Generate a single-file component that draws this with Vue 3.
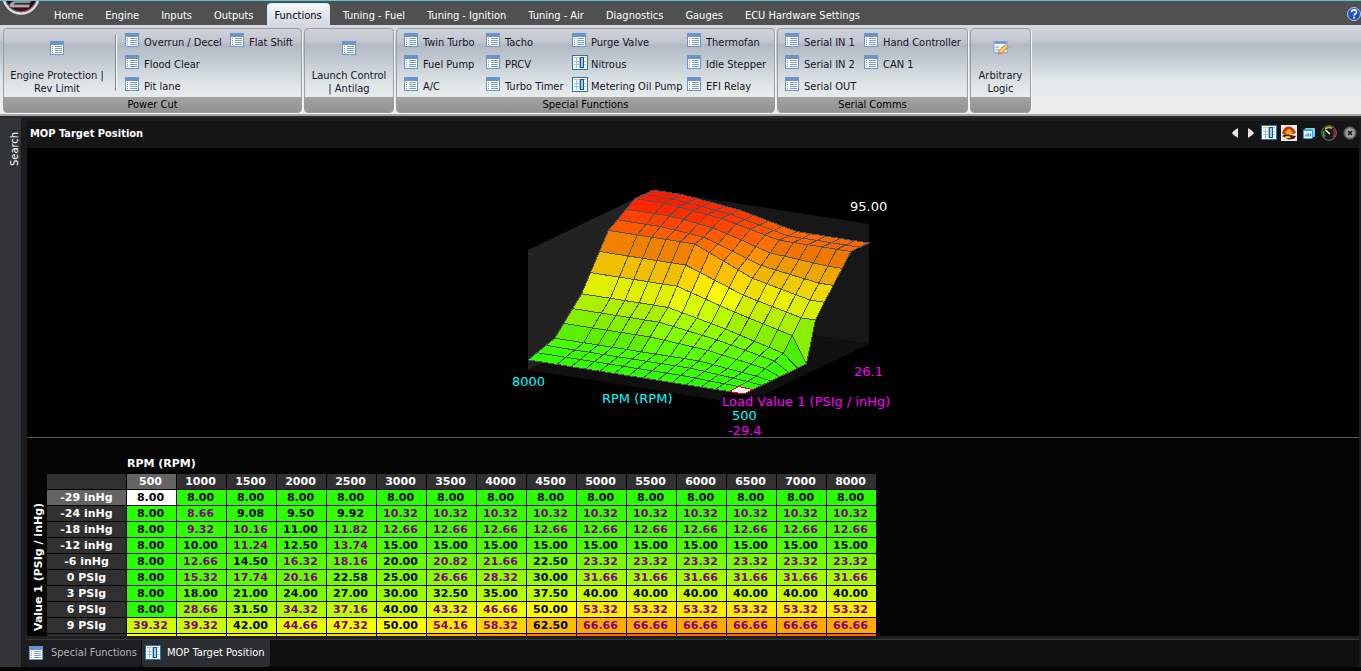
<script setup>
const tabs = [
  'Home', 'Engine', 'Inputs', 'Outputs', 'Functions', 'Tuning - Fuel', 'Tuning - Ignition',
  'Tuning - Air', 'Diagnostics', 'Gauges', 'ECU Hardware Settings',
]
const active = 'Functions'

const powerCut = [['Overrun / Decel', 'Flood Clear', 'Pit lane'], ['Flat Shift']]
const special = [
  ['Twin Turbo', 'Fuel Pump', 'A/C'],
  ['Tacho', 'PRCV', 'Turbo Timer'],
  ['Purge Valve', 'Nitrous', 'Metering Oil Pump'],
  ['Thermofan', 'Idle Stepper', 'EFI Relay'],
]
const serial = [['Serial IN 1', 'Serial IN 2', 'Serial OUT'], ['Hand Controller', 'CAN 1']]
const gridIcons = ['Nitrous', 'Metering Oil Pump']

const rpm = [500, 1000, 1500, 2000, 2500, 3000, 3500, 4000, 4500, 5000, 5500, 6000, 6500, 7000, 8000]
const flat = (v) => [v, v, v, v, v, v]
const rows = [
  { label: '-29 inHg', values: [8, 8, 8, 8, 8, 8, 8, 8, 8, ...flat(8)] },
  { label: '-24 inHg', values: [8, 8.66, 9.08, 9.5, 9.92, 10.32, 10.32, 10.32, 10.32, ...flat(10.32)] },
  { label: '-18 inHg', values: [8, 9.32, 10.16, 11, 11.82, 12.66, 12.66, 12.66, 12.66, ...flat(12.66)] },
  { label: '-12 inHg', values: [8, 10, 11.24, 12.5, 13.74, 15, 15, 15, 15, ...flat(15)] },
  { label: '-6 inHg', values: [8, 12.66, 14.5, 16.32, 18.16, 20, 20.82, 21.66, 22.5, ...flat(23.32)] },
  { label: '0 PSIg', values: [8, 15.32, 17.74, 20.16, 22.58, 25, 26.66, 28.32, 30, ...flat(31.66)] },
  { label: '3 PSIg', values: [8, 18, 21, 24, 27, 30, 32.5, 35, 37.5, ...flat(40)] },
  { label: '6 PSIg', values: [8, 28.66, 31.5, 34.32, 37.16, 40, 43.32, 46.66, 50, ...flat(53.32)] },
  { label: '9 PSIg', values: [39.32, 39.32, 42, 44.66, 47.32, 50, 54.16, 58.32, 62.5, ...flat(66.66)] },
]
// Row just below the fold: only its top edge shows, so it carries colour and no text.
const nextRow = [50, 50, 52.5, 55, 57.5, 60, 65, 70, 75, ...flat(80)]
const upper = [
  [60, 60, 61.66, 63.32, 65, 66.66, 70.5, 74.5, 78.5, 82, 83, 84, 85, 85, 85],
  [70, 70, 70.82, 71.66, 72.5, 73.32, 76.5, 80, 83, 86, 87.5, 89, 90, 90, 90],
  [80, 80, 80, 80, 80, 80, 82.5, 85, 87.5, 90, 91.25, 92.5, 93.75, 95, 95],
  [80, 80, 80, 80, 80, 80, 82.5, 85, 87.5, 90, 91.25, 92.5, 93.75, 95, 95],
  [80, 80, 80, 80, 80, 80, 82.5, 85, 87.5, 90, 91.25, 92.5, 93.75, 95, 95],
]
const surface = [...rows.map((r) => r.values), nextRow, ...upper]

const exact = [9.08, 9.92, 22.58]
const interpolated = (v) => (v * 2) % 1 !== 0 && !exact.includes(v)

function heat(v, k = 1) {
  const r = Math.min(255, (v / 50) * 255) * k
  const g = Math.min(255, ((100 - v) / 50) * 255) * k
  return `rgb(${Math.round(r)},${Math.round(g)},0)`
}

// Parallel projection: rpm runs down-right, load runs up-right, value runs up.
function project(i, j) {
  const f = (8000 - rpm[j]) / 7500
  const x = 528 + 216 * f + (125 * i) / 14
  const y = 370 + 34 * f - (60 * i) / 14 - (surface[i][j] * 120) / 95
  return `${x.toFixed(1)},${y.toFixed(1)}`
}
const cells = []
for (let i = 13; i >= 0; i--) {
  for (let j = 13; j >= 0; j--) {
    const mean = (surface[i][j] + surface[i + 1][j] + surface[i][j + 1] + surface[i + 1][j + 1]) / 4
    const steep = (j >= 9 || j <= 4) && surface[i + 1][j + 1] - surface[i][j + 1] > 6
    cells.push({
      points: [project(i, j), project(i + 1, j), project(i + 1, j + 1), project(i, j + 1)].join(' '),
      fill: heat(mean, steep ? 0.94 : 1),
      selected: i === 0 && j === 0,
    })
  }
}
</script>

<template>
  <div class="app">
    <svg width="0" height="0" class="defs" aria-hidden="true">
      <defs>
        <symbol id="i-list" viewBox="0 0 14 14">
          <rect width="14" height="14" fill="#6c93cb" />
          <rect x="1" y="4" width="12" height="9" fill="#fff" />
          <path d="M2 5.5h1M2 7.5h1M2 9.5h1M2 11.5h1M5 5.5h7M5 7.5h7M5 9.5h7M5 11.5h7" stroke="#7c9cd0" fill="none" />
        </symbol>
        <symbol id="i-grid" viewBox="0 0 16 16">
          <rect x=".5" y=".5" width="15" height="14" fill="#fff" stroke="#1a78b8" />
          <path d="M2 2.500h12" stroke="#f3c25b" fill="none" />
          <path d="M2 6.500h12M2 9.500h12M4.500 3v10M7.500 3v10" stroke="#9fc0e0" fill="none" />
          <rect x="8.500" y="2.500" width="3" height="10" fill="#9fcdf2" stroke="#1453a0" />
        </symbol>
      </defs>
    </svg>

    <header class="tabbar">
      <svg class="logo" viewBox="0 0 44 16" width="44" height="16" aria-label="Application menu">
        <defs>
          <radialGradient id="lg" cx="50%" cy="80%" r="60%">
            <stop offset="0" stop-color="#5c0a10" /><stop offset="1" stop-color="#160406" />
          </radialGradient>
        </defs>
        <circle cx="21" cy="-5" r="17.500" fill="url(#lg)" stroke="#dcdcdc" stroke-width="2.500" />
        <circle cx="21" cy="-5" r="15.800" fill="none" stroke="#77777c" />
        <path d="M14 0h17l-1 2H15l-1 1.500h16l-1 3H13q-5 0-3-4z" fill="#a9a9ac" stroke="#4c4c50" stroke-width=".6" />
      </svg>
      <nav class="tabs">
        <button v-for="t in tabs" :key="t" class="tab" :class="{ on: t === active }">{{ t }}</button>
      </nav>
      <button class="help" aria-label="Help">
        <svg viewBox="0 0 14 14" width="14" height="14">
          <circle cx="7" cy="7" r="6.500" fill="#2450b8" stroke="#b8c8ea" />
          <path d="M4.500 5.200q0-2.400 2.500-2.400t2.500 2.100q0 1.300-1.400 2-1 .5-1 1.500M7.100 9.800v1.600" fill="none" stroke="#fff" stroke-width="1.700" />
        </svg>
      </button>
    </header>

    <section class="ribbon">
      <div class="group g-power">
        <div class="body">
          <button class="big w-engine">
            <svg width="14" height="14"><use href="#i-list" /></svg>
            <span>Engine Protection |<br />Rev Limit</span>
          </button>
          <i class="rule"></i>
          <div class="cols c-power">
            <div v-for="(c, n) in powerCut" :key="n" class="col">
              <button v-for="b in c" :key="b" class="item"><svg width="14" height="14"><use href="#i-list" /></svg>{{ b }}</button>
            </div>
          </div>
        </div>
        <div class="foot">Power Cut</div>
      </div>

      <div class="group g-launch">
        <div class="body">
          <button class="big">
            <svg width="14" height="14"><use href="#i-list" /></svg>
            <span>Launch Control<br />| Antilag</span>
          </button>
        </div>
        <div class="foot"></div>
      </div>

      <div class="group g-special">
        <div class="body">
          <div class="cols c-special">
            <div v-for="(c, n) in special" :key="n" class="col">
              <button v-for="b in c" :key="b" class="item">
                <svg v-if="gridIcons.includes(b)" class="wide" width="16" height="16"><use href="#i-grid" /></svg>
                <svg v-else width="14" height="14"><use href="#i-list" /></svg>{{ b }}
              </button>
            </div>
          </div>
        </div>
        <div class="foot">Special Functions</div>
      </div>

      <div class="group g-serial">
        <div class="body">
          <div class="cols c-serial">
            <div v-for="(c, n) in serial" :key="n" class="col">
              <button v-for="b in c" :key="b" class="item"><svg width="14" height="14"><use href="#i-list" /></svg>{{ b }}</button>
            </div>
          </div>
        </div>
        <div class="foot">Serial Comms</div>
      </div>

      <div class="group g-logic">
        <div class="body">
          <button class="big">
            <svg viewBox="0 0 16 15" width="16" height="15">
              <rect x=".5" y=".5" width="14" height="12" fill="#f4f8fd" stroke="#7fa3d6" />
              <rect x="1" y="1" width="13" height="2" fill="#6c93cb" />
              <path d="M2 6.500h4M2 9.500h4M8 6.500h5" stroke="#7895c4" />
              <path d="M5 14l1-4 7-6 3 2.500-7 6.500z" fill="#f4bf4c" stroke="#b47a20" stroke-width=".8" />
              <path d="M7 11l7-6" stroke="#fde6a0" />
            </svg>
            <span>Arbitrary<br />Logic</span>
          </button>
        </div>
        <div class="foot"></div>
      </div>
    </section>

    <div class="work">
      <aside class="side"><button class="search">Search</button></aside>
      <main class="main">
        <div class="titlebar">
          <h1>MOP Target Position</h1>
          <div class="tools">
            <button class="nav" aria-label="Previous"><svg width="16" height="16"><path d="M11 3v10q-5-3-6-5 1-2 6-5z" fill="#e8e8e8" /></svg></button>
            <button class="nav" aria-label="Next"><svg width="16" height="16"><path d="M4 3v10q5-3 6-5-1-2-6-5z" fill="#e8e8e8" /></svg></button>
            <button aria-label="Table view"><svg width="16" height="16"><use href="#i-grid" /></svg></button>
            <button aria-label="Surface view">
              <svg width="16" height="16">
                <rect width="16" height="16" fill="#ececec" />
                <path d="M1 8Q3 1 8 1.500T15 8l-3 1-5-1-4 2z" fill="#c23a10" />
                <path d="M4 8q2-4 5-4l3 4-2 2-4-1z" fill="#f0a51c" />
                <path d="M1 11q4-3 8-1l6 1-2 3-6 .5z" fill="#5a1208" />
                <path d="M3 12q4-2 7 .5l-4 1z" fill="#f7d23a" />
              </svg>
            </button>
            <button aria-label="Windows">
              <svg width="16" height="16">
                <rect x="4" y="3" width="10" height="9" rx="1" fill="#7fd0f4" />
                <rect x="2.500" y="4.500" width="9" height="9" rx="1" fill="#e8f6fd" stroke="#35a6de" />
                <path d="M3 5.500h8" stroke="#35a6de" /><path d="M5 11.500v-2M7 11.500v-3M9.500 11.500v-3" stroke="#2a8fd0" stroke-width="1.500" />
              </svg>
            </button>
            <button aria-label="Gauge">
              <svg width="16" height="16">
                <circle cx="8" cy="8" r="7.300" fill="#16181a" stroke="#777" />
                <path d="M4 12A5.500 5.500 0 0 1 3 6" stroke="#2ab04a" stroke-width="1.500" fill="none" />
                <path d="M4 4.300A5.500 5.500 0 0 1 11 3.400" stroke="#d8c020" stroke-width="1.500" fill="none" />
                <path d="M12 4.500A5.500 5.500 0 0 1 12 12" stroke="#d02020" stroke-width="1.500" fill="none" />
                <path d="M9 9L4.500 5" stroke="#fff" stroke-width="1.300" />
              </svg>
            </button>
            <button class="close" aria-label="Close">
              <svg width="16" height="16">
                <circle cx="8" cy="8" r="6.500" fill="#707070" stroke="#333" />
                <circle cx="8" cy="8" r="4.500" fill="#a4a4a4" />
                <path d="M6 6l4 4M10 6l-4 4" stroke="#151515" stroke-width="1.700" />
              </svg>
            </button>
          </div>
        </div>

        <div class="chart">
          <svg viewBox="27 148 1332 289" width="100%" height="100%" role="img" aria-label="Surface chart">
            <polygon points="528,250 653,190 653,310 528,370" fill="#222" />
            <polygon points="653,190 869,224 869,344 653,310" fill="#171717" />
            <polygon points="528,370 653,310 869,344 744,404" fill="#101010" />
            <polygon v-for="(c, n) in cells" :key="n" :points="c.points" :fill="c.selected ? '#fff' : c.fill" :class="['cell', { sel: c.selected }]" />
            <rect x="722" y="395" width="168" height="13" fill="#000" />
            <g class="labels">
              <text x="850" y="211" fill="#fff">95.00</text>
              <text x="854" y="376" fill="#f0f">26.1</text>
              <text x="512" y="386" fill="#0ff">8000</text>
              <text x="602" y="403" fill="#0ff">RPM (RPM)</text>
              <text x="722" y="406" fill="#f0f">Load Value 1 (PSIg / inHg)</text>
              <text x="732" y="420" fill="#0ff">500</text>
              <text x="728" y="435" fill="#f0f">-29.4</text>
            </g>
          </svg>
        </div>

        <div class="sheet">
          <div class="yaxis">Value 1 (PSIg / inHg)</div>
          <div class="grid">
            <table>
              <caption>RPM (RPM)</caption>
              <thead>
                <tr>
                  <th class="corner"></th>
                  <th v-for="(r, n) in rpm" :key="r" scope="col" :class="{ hot: n === 0 }">{{ r }}</th>
                </tr>
              </thead>
              <tbody>
                <tr v-for="(r, i) in rows" :key="r.label">
                  <th scope="row" :class="{ hot: i === 0 }">{{ r.label }}</th>
                  <td
                    v-for="(v, j) in r.values" :key="j"
                    :class="{ mid: interpolated(v) }"
                    :style="{ backgroundColor: i === 0 && j === 0 ? '#fff' : heat(v) }"
                  >{{ v.toFixed(2) }}</td>
                </tr>
                <tr aria-hidden="true">
                  <th></th>
                  <td v-for="(v, j) in nextRow" :key="j" :style="{ backgroundColor: heat(v) }"></td>
                </tr>
              </tbody>
            </table>
          </div>
        </div>

        <nav class="docs">
          <button class="doc"><svg width="14" height="14"><use href="#i-list" /></svg>Special Functions</button>
          <button class="doc open"><svg width="16" height="16"><use href="#i-grid" /></svg>MOP Target Position</button>
        </nav>
      </main>
    </div>
  </div>
</template>

<style>
body { margin: 0; background: #000; }
</style>

<style scoped>
.app {
  height: 100vh; display: flex; flex-direction: column; overflow: hidden; box-sizing: border-box;
  padding-bottom: 4px; background: #050505; color: #fff;
  font: 11px/13px "DejaVu Sans Condensed", "DejaVu Sans", sans-serif;
}
.defs { position: absolute; }
button { font: inherit; color: inherit; background: none; border: 0; padding: 0; margin: 0; white-space: nowrap; }
svg { display: block; flex: none; }

.tabbar { flex: none; height: 25px; display: flex; box-sizing: border-box; border-top: 1px solid #55c8cc; background: #505050; }
.logo { margin-right: -1px; }
.tabs { display: flex; flex: 1; align-items: flex-end; }
.tab { height: 22px; padding: 2px 11px 0; border: 0; }
.tab.on {
  color: #000; padding: 2px 7px 0; margin: 0 2px; border: 1px solid #c8ecf0; border-bottom: 0; border-radius: 4px 4px 0 0;
  background: linear-gradient(#f4f6f9, #d3d8e0);
}
.help { align-self: center; margin-bottom: -2px; }

.ribbon {
  flex: none; height: 91px; box-sizing: border-box; display: flex; align-items: flex-start; gap: 2px; padding: 3px 3px 0;
  border-bottom: 2px solid #a6a6a6; color: #15151f;
  background: linear-gradient(#d8dae1 0, #c2c6d1 17px, #b3bbc7 18px, #c3cad3 34px, #e2e9ea 56px, #ecefee 86px);
}
.group {
  height: 85px; box-sizing: border-box; display: flex; flex-direction: column; border: 1px solid #999ea5; border-radius: 4px; overflow: hidden;
  box-shadow: 1px 1px 0 #f5f5f5;
  background: linear-gradient(#cfd2da 0, #bfc4cf 14px, #b0b8c4 15px, #c2c9d2 31px, #dfe6e7 56px, #e8eceb 70px);
}
.g-power { width: 299px; }
.g-launch { width: 90px; }
.g-special { width: 379px; }
.g-serial { width: 191px; }
.g-logic { width: 61px; }
.body { height: 68px; display: flex; }
.foot { flex: 1; text-align: center; line-height: 16px; color: #000; background: linear-gradient(#a3a5a5, #8f9191); }
.big { flex: 1; display: flex; flex-direction: column; align-items: center; padding-top: 12px; gap: 14px; }
.w-engine { flex: none; width: 106px; }
.big svg { height: 14px; }
.rule { width: 1px; margin: 6px 4px 6px 5px; background: #7f848c; border-right: 1px solid #fff; }
.cols { display: grid; padding: 2px 0 0 4px; }
.c-power { grid-template-columns: 105px auto; }
.c-special { grid-template-columns: 82px 86px 115px auto; padding-left: 7px; }
.c-serial { grid-template-columns: 79px auto; padding-left: 7px; }
.item { height: 22px; display: flex; align-items: center; gap: 5px; }
.item svg { margin-bottom: 4px; }
.item .wide { margin: 0 -2px 2px 0; }

.work { flex: 1; min-height: 0; display: flex; border-top: 2px solid #2a2a2a; background: #151617; }
.side { width: 21px; flex: none; background: #303338; border-right: 1px solid #151719; }
.search { writing-mode: vertical-rl; transform: rotate(180deg); padding: 7px 0; margin: 7px 0 0 8px; }
.main { flex: 1; min-width: 0; display: flex; flex-direction: column; padding: 3px 2px 0 5px; background: #1b1c1e; }
.titlebar { flex: none; height: 27px; display: flex; align-items: center; justify-content: space-between; padding-left: 3px; background: #151515; }
h1 { margin: 0 0 2px; font-size: 11px; line-height: 14px; }
.tools { display: flex; gap: 4px; margin: 0 1px 3px 0; }
.tools .nav { margin-right: -3px; }
.tools .close { margin-left: 1px; }
.chart { flex: 289 1 0; min-height: 0; background: #000; border-bottom: 1px solid #55555c; }
.cell { stroke: #505258; stroke-width: 1; shape-rendering: crispEdges; }
.sel { stroke: #f00; }
.labels { font: 13px "DejaVu Sans", sans-serif; }

.sheet { flex: 198 1 0; min-height: 0; overflow: hidden; display: flex; background: #040404; font: bold 11px/15px "DejaVu Sans", sans-serif; }
.yaxis { width: 20px; box-sizing: border-box; writing-mode: vertical-rl; transform: rotate(180deg); line-height: 16px; padding: 5px 4px 0 0; text-align: left; }
table { border-collapse: separate; border-spacing: 0; table-layout: fixed; width: 830px; }
caption { text-align: left; padding: 18px 0 3px 80px; }
th, td { box-sizing: border-box; height: 16px; padding: 0 2px 0 0; border: 0 solid #000; border-width: 0 1px 1px 0; text-align: center; white-space: nowrap; font-weight: bold; }
th { background: #303030; }
.corner, th[scope="row"] { width: 80px; }
th[scope="row"] { padding: 0; }
th.hot { background: #646464; }
td { color: #000; }
td.mid { color: #800080; }

.docs { flex: none; height: 31px; box-sizing: border-box; display: flex; gap: 1px; margin-left: -1px; padding-top: 4px; background: linear-gradient(#1e1f21 0, #1e1f21 3px, #34373b 3px, #34373b 4px, #0f0f0f 4px); }
.doc { height: 27px; display: flex; align-items: center; gap: 8px; padding: 0 4px 2px 3px; color: #b5b5b5; background: #1c1e21; border-radius: 0 0 4px 4px; }
.doc.open { gap: 6px; color: #fff; padding: 0 6px 2px 3px; background: #2b2e33; }
</style>
